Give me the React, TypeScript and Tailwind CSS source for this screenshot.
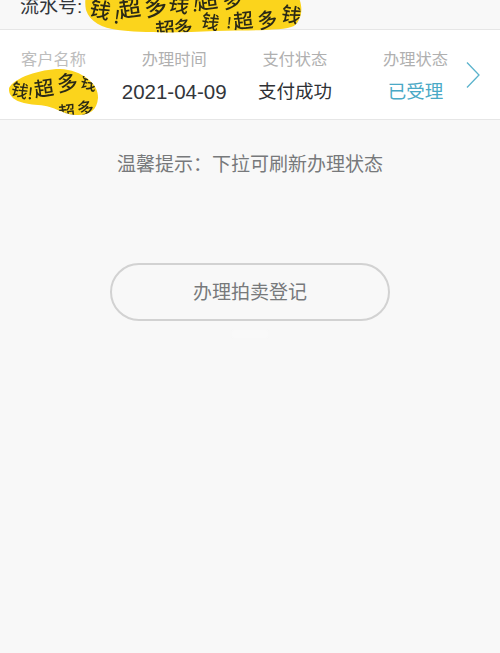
import React from 'react';

const cjk = "font-['Liberation_Sans','Noto_Sans_CJK_SC',sans-serif]";

const columns = [
  { label: '办理时间', value: '2021-04-09', valueClass: 'text-[20.5px] text-[#33363b]' },
  { label: '支付状态', value: '支付成功', valueClass: 'text-[18.5px] text-[#2f3135]' },
  { label: '办理状态', value: '已受理', valueClass: 'text-[18.5px] text-[#4aa9c6]' },
];

// hand-written scribble: [char, x, y, size, rotate]
type Mark = [string, number, number, number, number];

const Scribble: React.FC<{ marks: Mark[] }> = ({ marks }) => (
  <>
    {marks.map(([ch, x, y, size, rot], i) => (
      <text
        key={i}
        x={x}
        y={y}
        fontSize={size}
        fontWeight={500}
        fill="#2b2a16"
        fontFamily="'Noto Sans CJK SC', sans-serif"
        transform={`rotate(${rot} ${x} ${y})`}
      >
        {ch}
      </text>
    ))}
  </>
);

const topMarks: Mark[] = [
  ['钱', 88, 14, 21, 16],
  ['!', 113, 23, 18, 8],
  ['超', 120, 18, 22, -8],
  ['多', 146, 17, 23, -12],
  ['钱', 167, 9, 21, 12],
  ['!', 192, 11, 17, 8],
  ['超', 198, 10, 21, -8],
  ['多', 224, 9, 20, -12],
  ['超', 156, 38, 20, -6],
  ['多', 175, 36, 19, -10],
  ['钱', 200, 26, 18, 14],
  ['!', 226, 28, 15, 6],
  ['超', 234, 29, 20, -6],
  ['多', 259, 29, 20, -12],
  ['钱', 280, 20, 20, 12],
];

const nameMarks: Mark[] = [
  ['钱', 10, 94, 17, 16],
  ['!', 27, 99, 16, 6],
  ['超', 35, 97, 20, -8],
  ['多', 58, 92, 21, -8],
  ['钱', 79, 86, 17, 18],
  ['超', 59, 119, 17, -6],
  ['多', 78, 116, 17, -10],
];

export default function App() {
  return (
    <div className={`relative w-[500px] h-[653px] overflow-hidden bg-[#f8f8f8] ${cjk}`}>
      <div className="h-[29px] flex items-end pl-[20px] pb-[6px] text-[19px] leading-[32px] text-[#33363b] whitespace-nowrap">
        流水号:
      </div>

      <div className="h-[91px] bg-white border-y border-[#e6e6e6] flex items-start pl-[21px]">
        <div className="grid grid-cols-[65px_65px_65px_65px] gap-x-[55.7px] pt-[18px]">
          <div className="flex flex-col items-center gap-[8px] whitespace-nowrap">
            <span className="text-[16.25px] leading-[22px] text-[#bdbdbd]">客户名称</span>
            <span className="h-[28px]" />
          </div>
          {columns.map((c) => (
            <div key={c.label} className="flex flex-col items-center gap-[8px] whitespace-nowrap">
              <span className="text-[16.25px] leading-[22px] text-[#b0b0b0]">{c.label}</span>
              <span className={`leading-[28px] ${c.valueClass}`}>{c.value}</span>
            </div>
          ))}
        </div>
        <svg className="ml-[18px] mt-[31px] text-[#5bb3cc]" width="14" height="28" viewBox="0 0 14 28" fill="none">
          <path d="M1 1.5 L13 14 L1 26.5" stroke="currentColor" strokeWidth="1.3" />
        </svg>
      </div>

      <p className="mt-[31px] text-center text-[19px] leading-[28px] text-[#77797b]">温馨提示：下拉可刷新办理状态</p>

      <button className="block mx-auto mt-[84px] w-[280px] h-[58px] pt-[2px] rounded-full border-2 border-[#d2d2d2] text-[19px] text-[#77797b]">
        办理拍卖登记
      </button>

      {/* faint smudge under the button */}
      <div className="absolute left-[232px] top-[330px] w-[36px] h-[8px] bg-[#f9f9f9] blur-[1px]" />

      {/* yellow marker blobs over the private fields */}
      <svg className="absolute left-0 top-0 blur-[0.4px]" width="500" height="120" viewBox="0 0 500 120">
        <defs>
          <clipPath id="topClip">
            <path d="M86 -4 L298 -4 C303 6 303 18 294 26 C284 31 250 30 215 31 C180 33 140 33 118 30 C102 28 90 22 86 10 C85 5 85 0 86 -4 Z" />
          </clipPath>
          <clipPath id="nameClip">
            <path d="M9 88 C14 78 40 69 60 69 C82 70 99 84 98 98 C97 110 90 115 78 115 C62 115 56 106 38 105 C22 104 8 100 9 88 Z" />
          </clipPath>
        </defs>
        <g clipPath="url(#topClip)">
          <rect x="80" y="0" width="230" height="34" fill="#fbd41c" />
          <Scribble marks={topMarks} />
        </g>
        <g clipPath="url(#nameClip)">
          <rect x="0" y="60" width="110" height="60" fill="#fbd41c" />
          <Scribble marks={nameMarks} />
        </g>
      </svg>
    </div>
  );
}
